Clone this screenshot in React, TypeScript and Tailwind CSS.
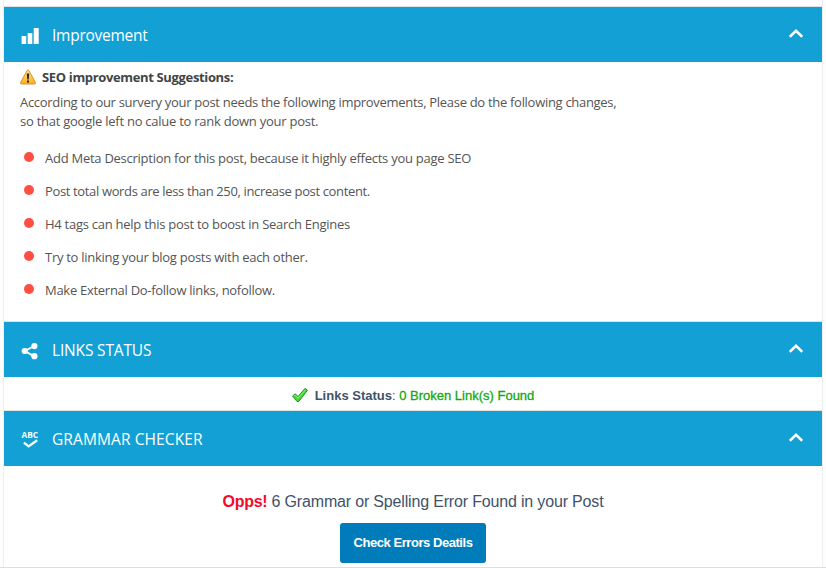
import type { ReactNode } from "react";

function Header({ icon, title, titleClass }: { icon: ReactNode; title: string; titleClass: string }) {
  return (
    <div className="h-14 border-t border-[#dfe3e5] bg-[#12a0d5] flex items-center pl-[17px] pr-[19px] text-white">
      <span className="mt-[2px] w-[18px] h-[18px] shrink-0">{icon}</span>
      <h2 className={`ml-[13px] pt-[2px] font-['Open_Sans',sans-serif] text-[15.5px] whitespace-nowrap ${titleClass}`}>{title}</h2>
      <svg className="ml-auto mb-[3px] shrink-0" width="14" height="9" viewBox="0 0 14 9" fill="none" stroke="currentColor" strokeWidth="2.5">
        <path d="M.8 7.8 7 1.8l6.2 6" />
      </svg>
    </div>
  );
}

const BarsIcon = (
  <svg width="18" height="18" viewBox="0 0 18 18" fill="currentColor">
    <path d="M.6 9h4.6v8H.6zM6.7 6h4.6v11H6.7zM12.7 1h5v16h-5z" />
  </svg>
);

const ShareIcon = (
  <svg width="18" height="18" viewBox="0 0 18 18" fill="currentColor">
    <path d="M13.4 4 3.7 9l9.7 5.3" fill="none" stroke="currentColor" strokeWidth="1.9" />
    <circle cx="13.4" cy="4.1" r="3.1" />
    <circle cx="3.7" cy="9" r="3.1" />
    <circle cx="13.4" cy="14.2" r="3.1" />
  </svg>
);

const SpellIcon = (
  <svg className="-mt-[5px]" width="18" height="22" viewBox="0 -4 18 22">
    <text x=".5" y="7.6" fill="currentColor" fontFamily="Open Sans, sans-serif" fontSize="8.5" fontWeight="700" textLength="16.5" lengthAdjust="spacingAndGlyphs">ABC</text>
    <path d="m2.9 12.6 4.7 3.8 8.6-6.1" fill="none" stroke="currentColor" strokeWidth="2.3" />
  </svg>
);

const suggestions = [
  { text: "Add Meta Description for this post, because it highly effects you page SEO", spacing: "tracking-[-0.26px]" },
  { text: "Post total words are less than 250, increase post content.", spacing: "tracking-[-0.355px]" },
  { text: "H4 tags can help this post to boost in Search Engines", spacing: "tracking-[-0.26px]" },
  { text: "Try to linking your blog posts with each other.", spacing: "tracking-[-0.28px]" },
  { text: "Make External Do-follow links, nofollow.", spacing: "tracking-[-0.28px]" },
];

export default function App() {
  return (
    <div className="h-[568px] w-[826px] overflow-hidden bg-[#fdfdfd] border-b border-[#dedede] pl-[3px] pr-[3px]">
      <div className="h-full w-[820px] bg-white border-x border-[#eeeeee] pt-[6px]">
        <section>
          <Header icon={BarsIcon} title="Improvement" titleClass="tracking-[-0.25px]" />
          <div className="h-[259px] px-4 font-['Open_Sans',sans-serif] text-[13px] text-[#444444] whitespace-nowrap">
            <div className="flex items-center h-[31px]">
              <svg className="mr-[6px] mb-[2px] shrink-0" width="16" height="16" viewBox="0 0 16 16">
                <defs>
                  <linearGradient id="warn" x1="0" y1="0" x2="0" y2="1">
                    <stop offset="0" stopColor="#ffe58a" />
                    <stop offset="1" stopColor="#ffad19" />
                  </linearGradient>
                </defs>
                <path d="M7.1 1.5Q8 .2 8.9 1.5l6.4 11.8q.7 1.7-1 1.7H1.7Q0 15 .7 13.3Z" fill="url(#warn)" stroke="#d89432" strokeWidth="1" />
                <path d="M6.8 4.5h2.4l-.5 6H7.3zM7 11.5h2v2H7z" fill="#252525" />
              </svg>
              <strong className="tracking-[-0.35px]">SEO improvement Suggestions:</strong>
            </div>
            <p className="leading-[19px] text-[#555555]">
              <span className="tracking-[-0.3px]">According to our survery your post needs the following improvements, Please do the following changes,</span><br />
              <span className="tracking-[-0.25px]">so that google left no calue to rank down your post.</span>
            </p>
            <ul className="pt-[11px]">
              {suggestions.map(({ text, spacing }) => (
                <li key={text} className="flex items-center h-[33px] pl-[3.5px] text-[#555555]">
                  <span className="mb-[3px] size-[10px] shrink-0 rounded-full bg-[#ff4f43]" />
                  <span className={`ml-[11.5px] ${spacing}`}>{text}</span>
                </li>
              ))}
            </ul>
          </div>
        </section>
        <section>
          <Header icon={ShareIcon} title="LINKS STATUS" titleClass="tracking-[-0.17px]" />
          <div className="h-[33px] flex items-center justify-center pt-1 font-['Liberation_Sans',Arial,sans-serif] text-[13px] whitespace-nowrap">
            <svg className="mr-[7px] mb-[2px] shrink-0" width="16" height="16" viewBox="0 0 16 16">
              <path d="m.6 9 2.7-2.2L6 9.6l7-8.2 2.5 1.8L6.8 14.5H5z" fill="#4bd637" stroke="#249127" strokeWidth="1" />
              <path d="m2 9 1.3-.8L6 11l7.4-8" fill="none" stroke="#94ef80" strokeWidth="1" />
            </svg>
            <strong className="text-[#3f526a]">Links Status</strong>
            <span className="text-[#3f526a]">:&nbsp;</span>
            <span className="text-[#12a812] [-webkit-text-stroke:0.3px]">0 Broken Link(s) Found</span>
          </div>
        </section>
        <section>
          <Header icon={SpellIcon} title="GRAMMAR CHECKER" titleClass="tracking-[0.1px]" />
          <div className="flex flex-col items-center pt-[24px] font-['Liberation_Sans',Arial,sans-serif]">
            <p className="text-base leading-6 text-[#3f526a] whitespace-nowrap tracking-[-0.17px]"><strong className="text-[#f30b29] tracking-[-0.3px]">Opps!</strong> 6 Grammar or Spelling Error Found in your Post</p>
            <button className="mt-[9px] h-10 w-[146px] rounded-[3px] bg-[#007cba] text-[13px] font-bold text-white whitespace-nowrap tracking-[-0.45px]">Check Errors Deatils</button>
          </div>
        </section>
      </div>
    </div>
  );
}
